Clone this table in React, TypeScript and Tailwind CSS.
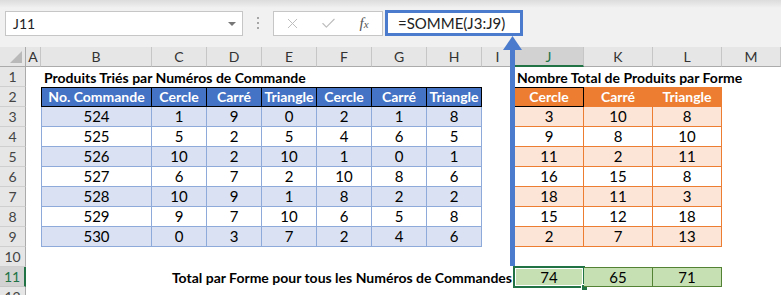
import React from "react";
import { X, Check } from "lucide-react";

const COLS = ["A", "B", "C", "D", "E", "F", "G", "H", "I", "J", "K", "L", "M"];

const leftHead = ["No. Commande", "Cercle", "Carré", "Triangle", "Cercle", "Carré", "Triangle"];
const leftRows = [
  [524, 1, 9, 0, 2, 1, 8],
  [525, 5, 2, 5, 4, 6, 5],
  [526, 10, 2, 10, 1, 0, 1],
  [527, 6, 7, 2, 10, 8, 6],
  [528, 10, 9, 1, 8, 2, 2],
  [529, 9, 7, 10, 6, 5, 8],
  [530, 0, 3, 7, 2, 4, 6],
];
const rightHead = ["Cercle", "Carré", "Triangle"];
const rightRows = [
  [3, 10, 8],
  [9, 8, 10],
  [11, 2, 11],
  [16, 15, 8],
  [18, 11, 3],
  [15, 12, 18],
  [2, 7, 13],
];
const totals = [74, 65, 71];

const c = "flex items-center justify-center text-[15px] leading-none text-black";
const hc = "flex items-center justify-center text-[14px] leading-none font-bold whitespace-nowrap";

const RowHead = ({ n }: { n: number }) => {
  const active = n === 11;
  return (
    <div
      className={
        active
          ? "flex items-center justify-center text-[14px] bg-[#d2d2d2] text-[#217346] border-b border-b-[#c6c6c6] border-r-2 border-r-[#217346]"
          : "flex items-center justify-center text-[14px] bg-[#e6e6e6] text-[#444] border-b border-b-[#cfcfcf] border-r border-r-[#ababab]"
      }
    >
      {n}
    </div>
  );
};

const Blank = () => <div className="bg-white" />;

const Toolbar = () => (
  <div className="relative h-[47px] bg-[#f1f1f1]">
    <div className="absolute inset-x-0 top-0 h-[8px] bg-linear-to-b from-[#dcdcdc] to-[#f1f1f1]" />
    <div className="relative flex items-start pt-[11px] pl-[5px]">
      <div className="flex h-[25px] w-[238px] items-center justify-between border border-[#c6c6c6] bg-white pl-[7px] pr-[6px]">
        <span className="text-[14px] text-[#222]">J11</span>
        <span className="h-0 w-0 border-x-[4px] border-t-[4px] border-x-transparent border-t-[#777]" />
      </div>
      <div className="flex w-[30px] flex-col items-center gap-[3px] pt-[6px]">
        <span className="h-[2px] w-[2px] bg-[#a6a6a6]" />
        <span className="h-[2px] w-[2px] bg-[#a6a6a6]" />
        <span className="h-[2px] w-[2px] bg-[#a6a6a6]" />
      </div>
      <div className="flex h-[25px] w-[110px] items-center border border-[#c6c6c6] bg-white">
        <div className="flex w-[36px] justify-center">
          <X size={17} strokeWidth={1.4} color="#bdbdbd" />
        </div>
        <div className="flex w-[36px] justify-center">
          <Check size={17} strokeWidth={1.6} color="#bdbdbd" />
        </div>
        <div className="flex w-[36px] justify-center font-['Liberation_Serif'] text-[15px] italic text-[#555]">
          f<span className="mt-[4px] text-[11px]">x</span>
        </div>
      </div>
      <div className="ml-[2px] -mt-[1px] flex h-[26px] w-[138px] items-center border-[3px] border-[#4a7bcd] bg-white pl-[10px] text-[15px] text-[#222]">
        =SOMME(J3:J9)
      </div>
    </div>
  </div>
);

export default function App() {
  return (
    <div className="relative h-[295px] w-[781px] overflow-hidden bg-white font-['Lato','Liberation_Sans',sans-serif]">
      <Toolbar />
      <div className="grid grid-cols-[26px_15px_111px_55px_55px_55px_55px_55px_55px_32px_70px_69px_69px_1fr] auto-rows-[20px]">
        {/* corner */}
        <div className="relative bg-[#e6e6e6] border-b border-r border-[#ababab]">
          <svg className="absolute bottom-[3px] right-[3px]" width="12" height="12">
            <polygon points="12,0 12,12 0,12" fill="#b9b9b9" />
          </svg>
        </div>
        {COLS.map((l) => (
          <div
            key={l}
            className={
              l === "J"
                ? "flex items-center justify-center text-[14px] bg-[#d2d2d2] text-[#217346] border-r border-r-[#c6c6c6] border-b-2 border-b-[#217346]"
                : "flex items-center justify-center text-[14px] bg-[#e6e6e6] text-[#333] border-r border-r-[#c6c6c6] border-b border-b-[#ababab]"
            }
          >
            {l}
          </div>
        ))}

        {/* row 1 */}
        <RowHead n={1} />
        <Blank />
        <div className="col-span-8 flex items-center pl-[3px] text-[14px] font-bold text-black whitespace-nowrap">
          Produits Triés par Numéros de Commande
        </div>
        <div className="col-span-4 flex items-center pl-[3px] text-[14px] font-bold text-black whitespace-nowrap">
          Nombre Total de Produits par Forme
        </div>

        {/* row 2 */}
        <RowHead n={2} />
        <Blank />
        {leftHead.map((h, i) => (
          <div
            key={i}
            className={`${hc} bg-[#4472c4] text-white border-t border-r border-b border-black ${i === 0 ? "border-l" : ""}`}
          >
            {h}
          </div>
        ))}
        <Blank />
        {rightHead.map((h, i) => (
          <div
            key={i}
            className={`${hc} bg-[#ed7d31] text-white ${i === 0 ? "border border-black" : "border-r border-b border-[#ed7d31]"}`}
          >
            {h}
          </div>
        ))}
        <Blank />

        {/* rows 3-9 */}
        {leftRows.map((row, r) => (
          <React.Fragment key={r}>
            <RowHead n={r + 3} />
            <Blank />
            {row.map((v, i) => (
              <div
                key={i}
                className={`${c} border-r border-b border-[#8eaadb] ${r % 2 === 0 ? "bg-[#d9e1f2]" : "bg-white"} ${i === 0 ? "border-l" : ""}`}
              >
                {v}
              </div>
            ))}
            <Blank />
            {rightRows[r].map((v, i) => (
              <div
                key={i}
                className={`${c} border-r border-b border-[#ed7d31] ${r % 2 === 0 ? "bg-[#fce4d6]" : "bg-white"} ${i === 0 ? "border-l" : ""}`}
              >
                {v}
              </div>
            ))}
            <Blank />
          </React.Fragment>
        ))}

        {/* row 10 */}
        <RowHead n={10} />
        <div className="col-span-13 bg-white" />

        {/* row 11 */}
        <RowHead n={11} />
        <div className="col-span-9 flex items-center justify-end pr-[2px] text-[14px] font-bold text-black whitespace-nowrap">
          Total par Forme pour tous les Numéros de Commandes
        </div>
        {totals.map((v, i) => (
          <div
            key={i}
            className={`${c} relative bg-[#c6e0b4] border-t border-r border-b border-[#548235] ${i === 0 ? "border-l" : ""}`}
          >
            {v}
            {i === 0 && (
              <>
                <span className="absolute -inset-[2px] border-2 border-[#217346]">
                  <span className="absolute inset-0 border border-white" />
                </span>
                <span className="absolute -bottom-[5px] -right-[5px] h-[7px] w-[7px] border border-white bg-[#217346]" />
              </>
            )}
          </div>
        ))}
        <Blank />

        {/* row 12 */}
        <RowHead n={12} />
        <div className="col-span-13 bg-white" />
      </div>

      {/* annotation arrow */}
      <svg className="pointer-events-none absolute left-0 top-0" width="781" height="295">
        <rect x="510" y="48" width="5" height="218" fill="#4a7bcd" />
        <polygon points="503,50 512.5,36 522,50" fill="#4a7bcd" />
      </svg>
    </div>
  );
}
